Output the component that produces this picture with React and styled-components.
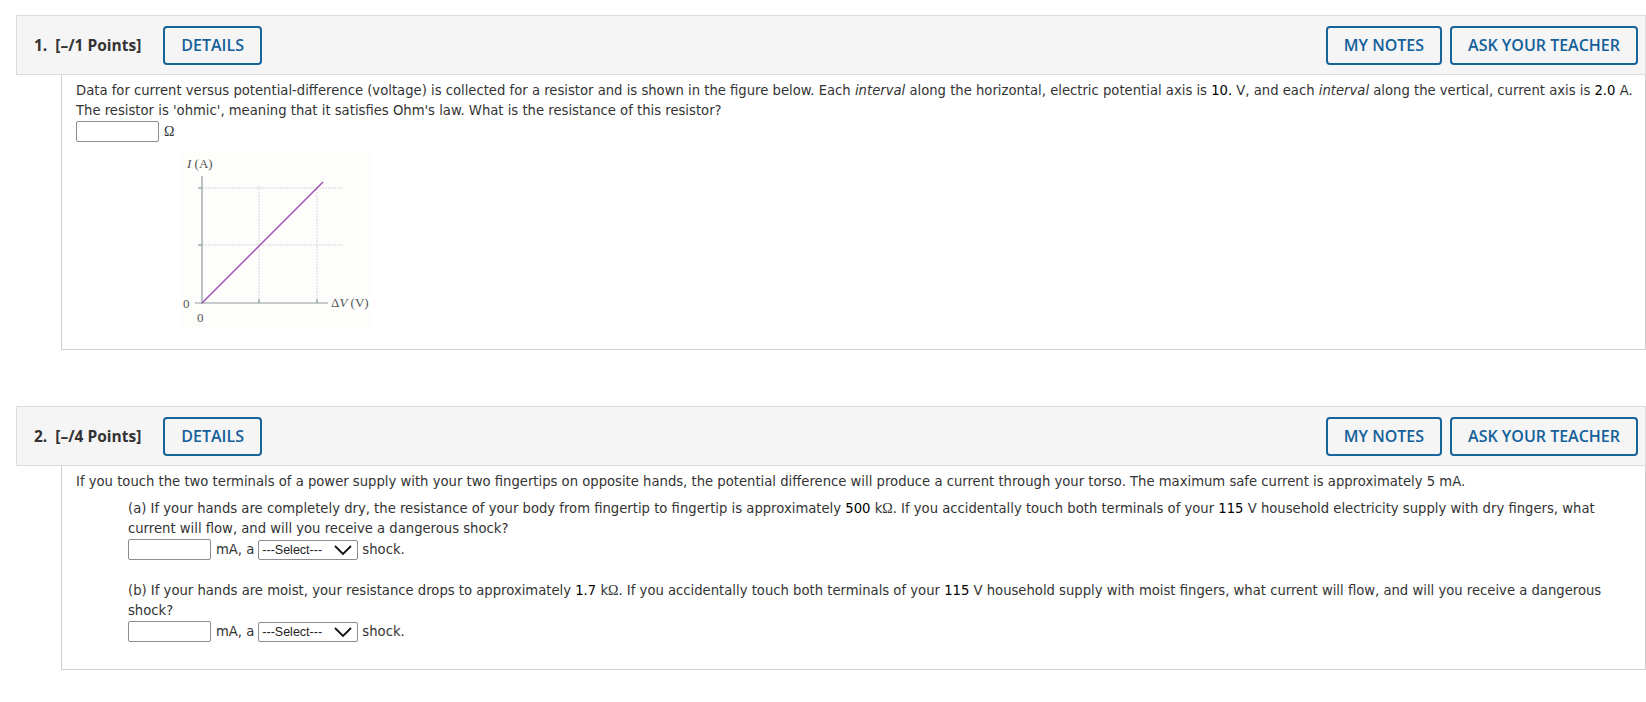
import React from 'react';
import styled, { createGlobalStyle } from 'styled-components';

const GlobalStyle = createGlobalStyle`
  html, body {
    margin: 0;
    padding: 0;
    background: #fff;
    overflow: hidden;
  }
`;

const Page = styled.div`
  padding: 15px 0 0 16px;
  width: 1630px;
`;

const Question = styled.section`
  margin-bottom: 56px;
`;

const Header = styled.div`
  display: flex;
  align-items: center;
  height: 58px;
  padding: 0 7px 0 17px;
  background: #f5f5f5;
  border: 1px solid #dcdcdc;
  font-family: "Open Sans", "Liberation Sans", sans-serif;
`;

const Title = styled.h3`
  margin: 0 22px 0 0;
  font-size: 15.5px;
  font-weight: 700;
  color: #333;
  white-space: pre;
`;

const Spacer = styled.div`
  flex: 1;
`;

const OutlineButton = styled.button`
  height: 39px;
  padding: 0 16px;
  margin-left: ${p => (p.gap ? '8px' : '0')};
  background: transparent;
  border: 2px solid #17649b;
  border-radius: 4px;
  color: #13609a;
  font-family: "Open Sans", "Liberation Sans", sans-serif;
  font-size: 16px;
  font-weight: 600;
  cursor: pointer;
`;

const Body = styled.div`
  margin-left: 45px;
  border-left: 1px solid #cfcfcf;
  border-right: 1px solid #cfcfcf;
  border-bottom: 1px solid #cfcfcf;
  padding: 6px 8px ${p => p.bottom || 18}px 14px;
  font-family: "DejaVu Sans", Verdana, sans-serif;
  font-size: 13.2px;
  line-height: 20px;
  color: #333;
`;

const Para = styled.div`
  margin: ${p => p.top || 0}px 0 0 ${p => p.indent || 0}px;
`;

const Num = styled.span`
  color: #000;
`;

const Ohm = styled.span`
  font-family: "Liberation Serif", "Times New Roman", serif;
  font-size: 14px;
`;

const AnswerRow = styled.div`
  display: flex;
  align-items: center;
  height: 21px;
`;

const TextInput = styled.input`
  box-sizing: border-box;
  width: 83px;
  height: 21px;
  margin: 0 5px 0 0;
  padding: 0;
  border: 1px solid #8d8d8d;
  border-radius: 2px;
  background: #fff;
`;

const SelectBox = styled.div`
  box-sizing: border-box;
  display: flex;
  align-items: center;
  justify-content: space-between;
  width: 100px;
  height: 20px;
  margin: 0 4px;
  padding: 0 4px 0 3px;
  border: 1px solid #8d8d8d;
  border-radius: 2px;
  font-family: "Liberation Sans", Arial, sans-serif;
  font-size: 12.5px;
  color: #222;
`;

const Figure = styled.div`
  margin: 4px 0 0 94px;
  width: 210px;
  height: 186px;
`;

const Chevron = () => (
  <svg width="20" height="12" viewBox="0 0 20 12">
    <path d="M2 2 L10 10 L18 2" fill="none" stroke="#111" strokeWidth="1.8" />
  </svg>
);

const Graph = () => (
  <svg width="210" height="186" viewBox="0 0 210 186">
    <rect x="10" y="6" width="190" height="176" fill="#fdfdfc" />
    <g fontFamily='"Liberation Serif", "Times New Roman", serif' fontSize="13" fill="#555">
      <text x="17" y="22"><tspan fontStyle="italic">I</tspan> (A)</text>
      <text x="13" y="162">0</text>
      <text x="27" y="176">0</text>
      <text x="161" y="161"><tspan>Δ</tspan><tspan fontStyle="italic">V</tspan> (V)</text>
    </g>
    <g stroke="#d6d6d6" strokeWidth="1" strokeDasharray="2 1">
      <line x1="32" y1="42" x2="172" y2="42" />
      <line x1="32" y1="99" x2="172" y2="99" />
      <line x1="89" y1="40" x2="89" y2="157" />
      <line x1="147" y1="40" x2="147" y2="157" />
    </g>
    <g stroke="#8f9a9a" strokeWidth="1.2">
      <line x1="32" y1="30" x2="32" y2="158" />
      <line x1="25" y1="157" x2="158" y2="157" />
      <line x1="28" y1="42" x2="32" y2="42" />
      <line x1="28" y1="99" x2="32" y2="99" />
      <line x1="89" y1="153" x2="89" y2="157" />
      <line x1="147" y1="153" x2="147" y2="157" />
    </g>
    <line x1="32" y1="157" x2="153" y2="36" stroke="#9b4fae" strokeWidth="1.4" />
  </svg>
);

const answerRow = () => (
  <AnswerRow>
    <TextInput type="text" />
    <span>mA, a</span>
    <SelectBox>
      <span>---Select---</span>
      <Chevron />
    </SelectBox>
    <span>shock.</span>
  </AnswerRow>
);

const QuestionHeader = ({ title }) => (
  <Header>
    <Title>{title}</Title>
    <OutlineButton>DETAILS</OutlineButton>
    <Spacer />
    <OutlineButton>MY NOTES</OutlineButton>
    <OutlineButton gap>ASK YOUR TEACHER</OutlineButton>
  </Header>
);

export default function App() {
  return (
    <Page>
      <GlobalStyle />
      <Question>
        <QuestionHeader title="1.  [–/1 Points]" />
        <Body bottom={17}>
          <Para>
            Data for current versus potential-difference (voltage) is collected for a resistor and is shown in the figure below. Each <i>interval</i> along the horizontal, electric potential axis is <Num>10.</Num> V, and each <i>interval</i> along the vertical, current axis is <Num>2.0</Num> A. The resistor is 'ohmic', meaning that it satisfies Ohm's law. What is the resistance of this resistor?
          </Para>
          <AnswerRow>
            <TextInput type="text" />
            <Ohm>Ω</Ohm>
          </AnswerRow>
          <Figure>
            <Graph />
          </Figure>
        </Body>
      </Question>
      <Question>
        <QuestionHeader title="2.  [–/4 Points]" />
        <Body bottom={27}>
          <Para>
            If you touch the two terminals of a power supply with your two fingertips on opposite hands, the potential difference will produce a current through your torso. The maximum safe current is approximately 5 mA.
          </Para>
          <Para indent={52} top={7}>
            (a) If your hands are completely dry, the resistance of your body from fingertip to fingertip is approximately <Num>500</Num> k<Ohm>Ω</Ohm>. If you accidentally touch both terminals of your <Num>115</Num> V household electricity supply with dry fingers, what current will flow, and will you receive a dangerous shock?
            {answerRow()}
          </Para>
          <Para indent={52} top={21}>
            (b) If your hands are moist, your resistance drops to approximately <Num>1.7</Num> k<Ohm>Ω</Ohm>. If you accidentally touch both terminals of your <Num>115</Num> V household supply with moist fingers, what current will flow, and will you receive a dangerous shock?
            {answerRow()}
          </Para>
        </Body>
      </Question>
    </Page>
  );
}
